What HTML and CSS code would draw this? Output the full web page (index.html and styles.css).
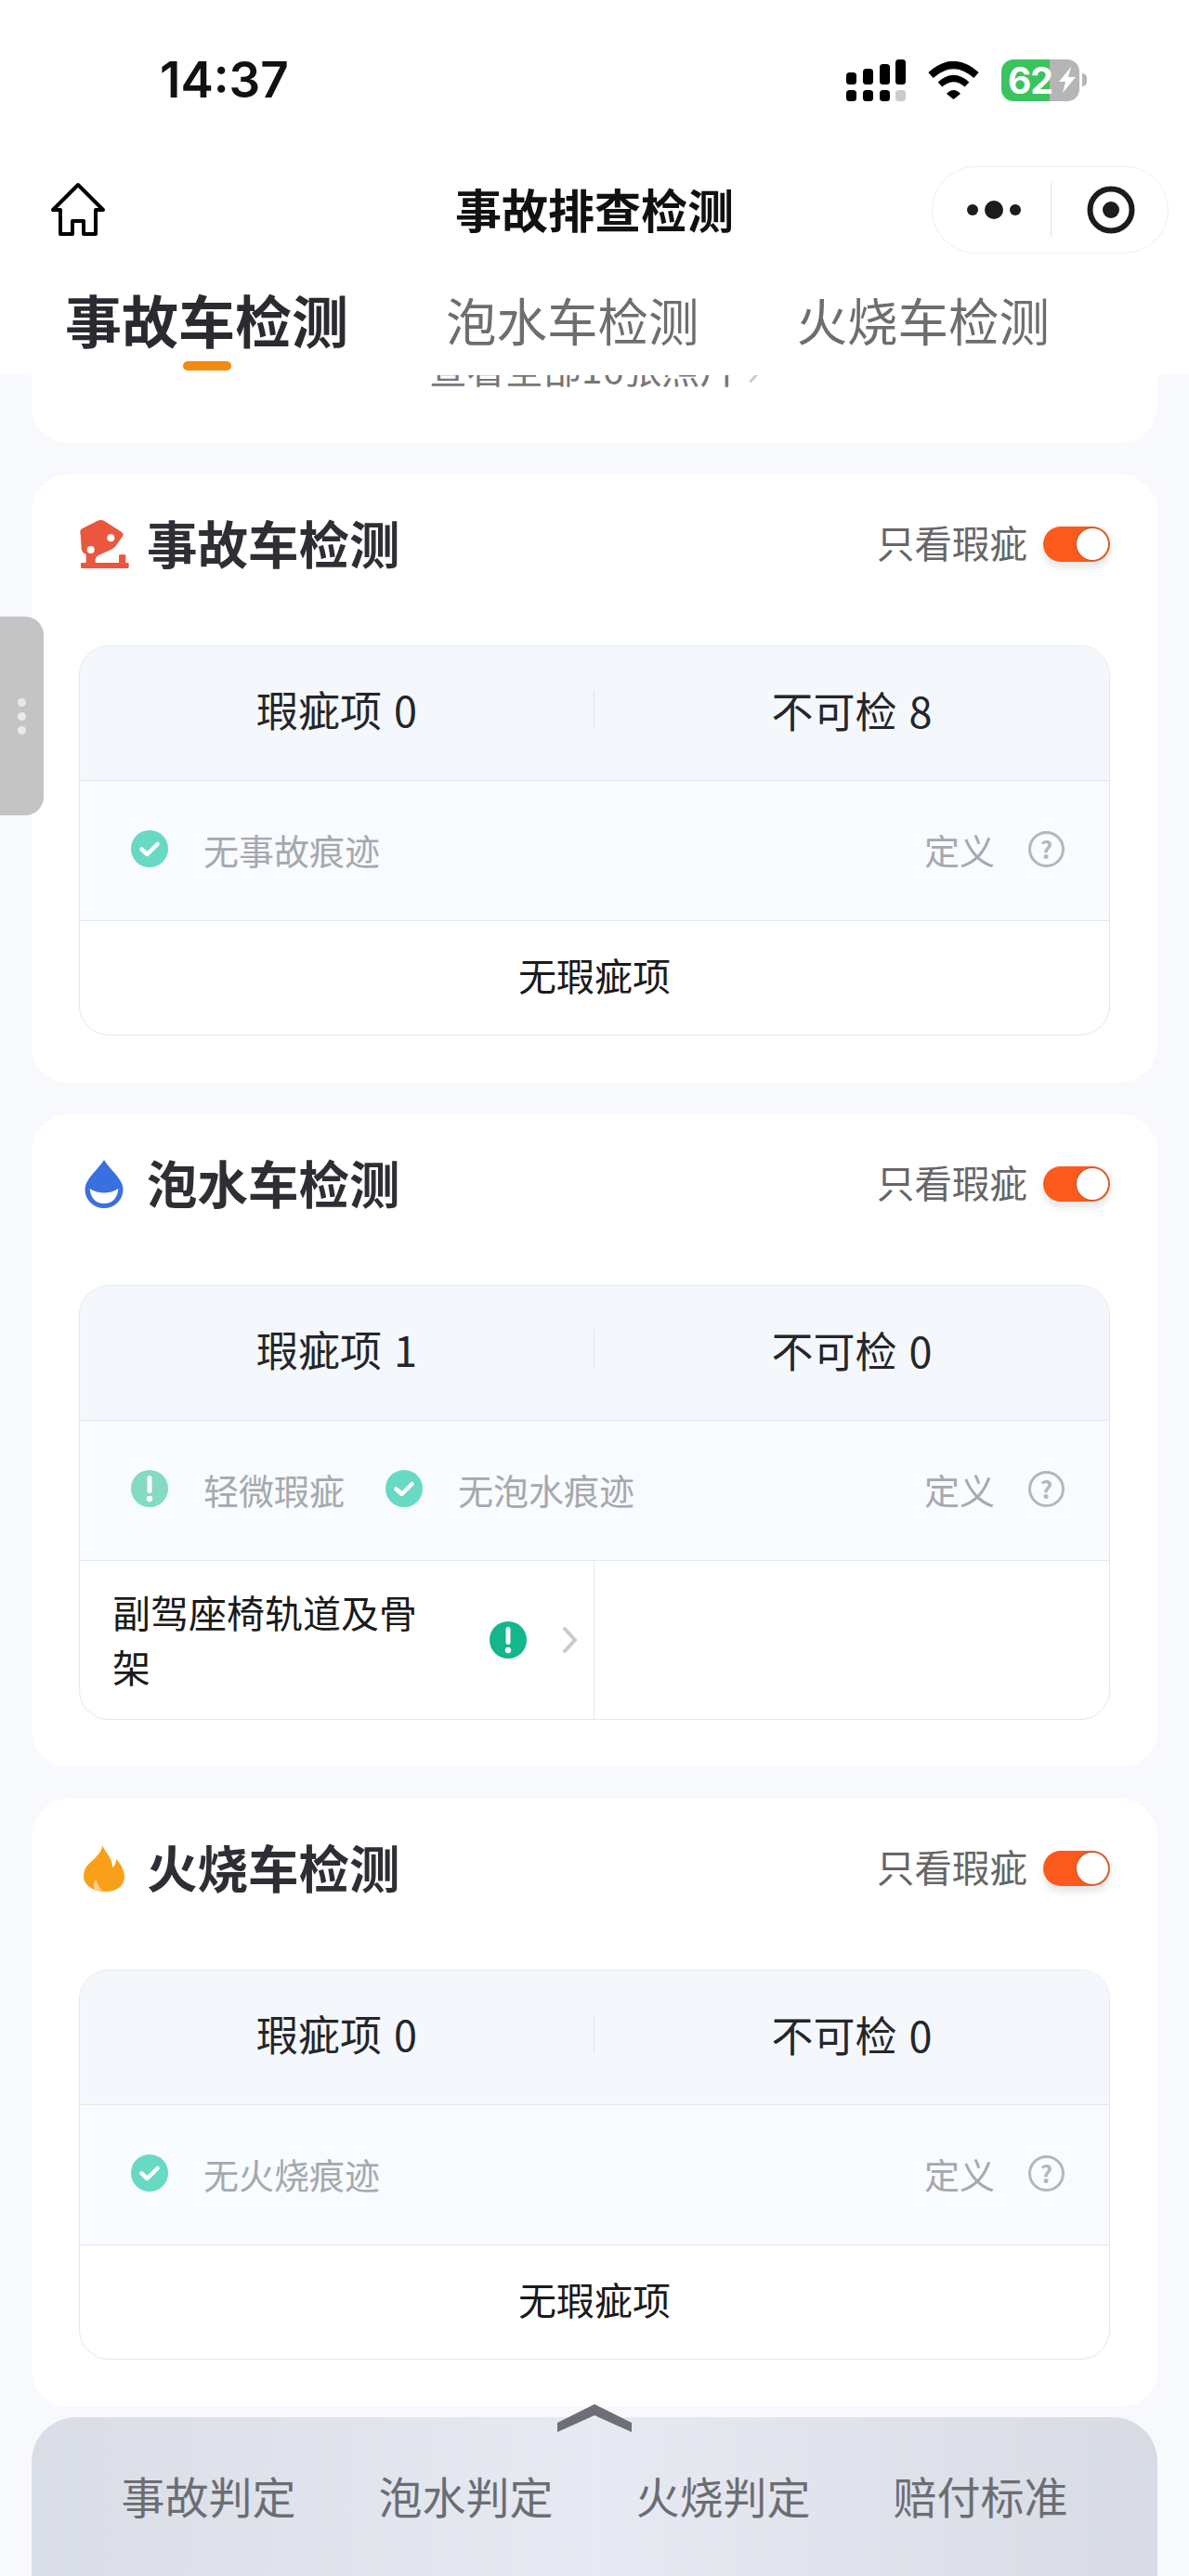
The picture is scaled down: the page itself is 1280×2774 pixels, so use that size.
FILE: index.html
```html
<!DOCTYPE html>
<html lang="zh-CN">
<head>
  <meta charset="UTF-8" />
  <meta name="viewport" content="width=device-width, initial-scale=1.0" />
  <title>事故排查检测</title>
  <link rel="stylesheet" href="styles.css">
</head>
<body>
  <svg class="sprites" width="0" height="0">
    <symbol id="icon-check" viewBox="0 0 40 40">
      <circle cx="20" cy="20" r="20" fill="currentColor" />
      <path d="M11.5 20.5l6 5.5 11-11" fill="none" stroke="#fff" stroke-width="4.5" stroke-linecap="round" stroke-linejoin="round" />
    </symbol>
    <symbol id="icon-alert" viewBox="0 0 40 40">
      <circle cx="20" cy="20" r="20" fill="currentColor" />
      <rect x="17.5" y="6" width="5" height="19" rx="2.5" fill="#fff" />
      <circle cx="20" cy="31" r="3.2" fill="#fff" />
    </symbol>
    <symbol id="icon-chevron" viewBox="0 0 17 30">
      <path d="M3 3l11 12L3 27" fill="none" stroke="#c9cacc" stroke-width="4" stroke-linecap="round" stroke-linejoin="round" />
    </symbol>
  </svg>

  <header id="topBar">
    <div class="status-bar">
      <div class="clock">14:37</div>
      <div class="status-icons">
        <svg class="signal" width="64" height="45" viewBox="0 0 64 45">
          <rect x="0" y="14" width="11" height="13" rx="3.5" />
          <rect x="18" y="10" width="11" height="17" rx="3.5" />
          <rect x="36" y="5" width="11" height="22" rx="3.5" />
          <rect x="53" y="0" width="11" height="27" rx="3.5" />
          <rect x="0" y="33" width="11" height="12" rx="3.5" />
          <rect x="18" y="33" width="11" height="12" rx="3.5" />
          <rect x="36" y="33" width="11" height="12" rx="3.5" />
          <rect x="53" y="33" width="11" height="12" rx="3.5" fill="#cbcbcb" />
        </svg>
        <svg class="wifi" width="57" height="41" viewBox="0 0 57 41">
          <path d="M4 15Q28.500-7 53 15" fill="none" stroke="#000" stroke-width="8" />
          <path d="M14 25Q28.500 12 43 25" fill="none" stroke="#000" stroke-width="7" />
          <path d="M21 35Q28.500 27 36 35L28.500 41Z" />
        </svg>
        <div class="battery">
          <div class="battery-body">
            <span>62</span>
            <svg width="22" height="28" viewBox="0 0 22 28"><path d="M15 0L2 16h7L6 28l14-17h-8z" fill="#fff" /></svg>
          </div>
          <div class="battery-cap"></div>
        </div>
      </div>
    </div>

    <div class="nav-bar">
      <svg class="home" width="60" height="60" viewBox="0 0 60 60">
        <path d="M30 3L3 30h8v26h13V42h12v14h13V30h8z" fill="none" stroke="#000" stroke-width="4" stroke-linejoin="round" />
      </svg>
      <div class="nav-title">事故排查检测</div>
      <div class="capsule">
        <svg width="64" height="24" viewBox="0 0 64 24">
          <circle cx="8" cy="12" r="6" fill="#1c1c1c" />
          <circle cx="31" cy="12" r="10" fill="#1c1c1c" />
          <circle cx="54" cy="12" r="6" fill="#1c1c1c" />
        </svg>
        <div class="capsule-line"></div>
        <svg width="52" height="52" viewBox="0 0 52 52">
          <circle cx="26" cy="26" r="22.500" fill="none" stroke="#1c1c1c" stroke-width="6" />
          <circle cx="26" cy="26" r="9" fill="#1c1c1c" />
        </svg>
      </div>
    </div>

    <div class="tabs">
      <div class="tab active">事故车检测<i class="tab-mark"></i></div>
      <div class="tab">泡水车检测</div>
      <div class="tab">火烧车检测</div>
    </div>
  </header>

  <div class="side-handle"><i></i><i></i><i></i></div>

  <main>
    <section class="card photo-card">
      <span>查看全部16张照片</span>
      <svg width="12" height="22" viewBox="0 0 17 30"><use href="#icon-chevron" /></svg>
    </section>

    <section class="card">
      <div class="card-head">
        <div class="card-title">
          <svg class="title-icon" width="54" height="52" viewBox="0 0 160 156">
            <path d="M4 44Q0 34 9 28L58 3Q70-3 82 4L136 38Q146 45 139 54L116 86Q110 92 102 96L62 114Q54 118 52 126V142H22V110Q10 108 7 94Z" fill="#e9573f" />
            <rect x="5" y="138" width="155" height="18" rx="4" fill="#e9573f" />
            <rect x="128" y="112" width="22" height="32" rx="3" fill="#e9573f" />
            <circle cx="102" cy="58" r="12" fill="#fff" />
            <circle cx="37" cy="96" r="12" fill="#fff" />
          </svg>
          <h2>事故车检测</h2>
        </div>
        <div class="only-flaws"><span>只看瑕疵</span><div class="switch"><i></i></div></div>
      </div>
      <div class="report">
        <div class="report-count">
          <div>瑕疵项 0</div>
          <div>不可检 8</div>
        </div>
        <div class="report-status">
          <div class="status-item"><svg class="mark check"><use href="#icon-check" /></svg>无事故痕迹</div>
          <div class="define">定义<span class="help">?</span></div>
        </div>
        <div class="report-empty">无瑕疵项</div>
      </div>
    </section>

    <section class="card">
      <div class="card-head">
        <div class="card-title">
          <svg class="title-icon" width="41" height="52" viewBox="0 0 41 52">
            <path d="M20.500 0C26 10 41 20 41 32A20.500 20 0 0 1 0 32C0 20 15 10 20.500 0Z" fill="#3a6fe0" />
            <path d="M5 31Q20.500 40 36 31Q34 47 20.500 47Q7 47 5 31Z" fill="#fff" />
          </svg>
          <h2>泡水车检测</h2>
        </div>
        <div class="only-flaws"><span>只看瑕疵</span><div class="switch"><i></i></div></div>
      </div>
      <div class="report">
        <div class="report-count">
          <div>瑕疵项 1</div>
          <div>不可检 0</div>
        </div>
        <div class="report-status">
          <div class="status-item"><svg class="mark alert-soft"><use href="#icon-alert" /></svg>轻微瑕疵</div>
          <div class="status-item"><svg class="mark check"><use href="#icon-check" /></svg>无泡水痕迹</div>
          <div class="define">定义<span class="help">?</span></div>
        </div>
        <div class="report-items">
          <div class="flaw-item">
            <div class="flaw-name">副驾座椅轨道及骨架</div>
            <svg class="mark alert"><use href="#icon-alert" /></svg>
            <svg class="flaw-arrow" width="17" height="30"><use href="#icon-chevron" /></svg>
          </div>
          <div></div>
        </div>
      </div>
    </section>

    <section class="card">
      <div class="card-head">
        <div class="card-title">
          <svg class="title-icon" width="44" height="50" viewBox="0 0 44 50">
            <path d="M20 0C24 9 31 13 31 24C34 22 35 19 35 15C41 21 44 28 44 34C44 44 35 50 24 50C11 50 0 44 0 33C0 22 9 18 14 12C17 9 20 5 20 0Z" fill="#f9a01b" />
            <path d="M12 48C10 44 11 40 13 37C15 42 17 45 20 49Z" fill="#fdd28a" />
          </svg>
          <h2>火烧车检测</h2>
        </div>
        <div class="only-flaws"><span>只看瑕疵</span><div class="switch"><i></i></div></div>
      </div>
      <div class="report">
        <div class="report-count">
          <div>瑕疵项 0</div>
          <div>不可检 0</div>
        </div>
        <div class="report-status">
          <div class="status-item"><svg class="mark check"><use href="#icon-check" /></svg>无火烧痕迹</div>
          <div class="define">定义<span class="help">?</span></div>
        </div>
        <div class="report-empty">无瑕疵项</div>
      </div>
    </section>
  </main>

  <footer class="bottom-sheet">
    <svg class="sheet-arrow" width="80" height="30" viewBox="0 0 80 30">
      <path d="M0 20L40 0L80 20V30L40 12L0 30Z" fill="#6d6f75" />
    </svg>
    <div>事故判定</div>
    <div>泡水判定</div>
    <div>火烧判定</div>
    <div>赔付标准</div>
  </footer>
</body>
</html>
```

FILE: styles.css
```css
body {
  margin: 0;
  width: 1280px;
  height: 2774px;
  overflow: hidden;
  position: relative;
  background-color: #f8f9fc;
  color: #1a1a1a;
  font-family: "Noto Sans CJK SC", "Noto Sans", sans-serif;
}

.sprites {
  display: block;
}

/* top area */
#topBar {
  position: relative;
  z-index: 2;
  height: 404px;
  background-color: #fff;
}

.status-bar {
  height: 179px;
  padding: 0 110px 7px 172px;
  box-sizing: border-box;
  display: flex;
  justify-content: space-between;
  align-items: center;
}

.clock {
  font-family: Inter, sans-serif;
  font-size: 53px;
  font-weight: 600;
  color: #111;
}

.status-icons {
  display: flex;
  align-items: center;
  gap: 23px;
}

.battery {
  display: flex;
  align-items: center;
  gap: 3px;
}

.battery-body {
  width: 84px;
  height: 45px;
  padding-left: 7px;
  box-sizing: border-box;
  border-radius: 13px;
  display: flex;
  align-items: center;
  gap: 5px;
  background: linear-gradient(90deg, #3bc45e 62%, #b5b5b5 62%);
  color: #fff;
  font-family: Inter, sans-serif;
  font-size: 39px;
  font-weight: 700;
  letter-spacing: -1px;
}

.battery-cap {
  width: 5px;
  height: 14px;
  border-radius: 0 5px 5px 0;
  background-color: #b5b5b5;
}

.nav-bar {
  height: 94px;
  padding: 0 22px;
  display: grid;
  grid-template-columns: 1fr auto 1fr;
  align-items: center;
}

.home {
  justify-self: start;
  margin-left: 32px;
}

.nav-title {
  padding-bottom: 4px;
  font-size: 50px;
  font-weight: 700;
  color: #111;
}

.capsule {
  justify-self: end;
  width: 255px;
  height: 94px;
  box-sizing: border-box;
  border: 1px solid #efefef;
  border-radius: 47px;
  display: flex;
  align-items: center;
  padding-left: 35px;
}

.capsule-line {
  width: 1px;
  height: 60px;
  margin: 0 38px 0 28px;
  background-color: #e6e6e6;
}

.tabs {
  height: 131px;
  padding: 38px 0 0 70px;
  box-sizing: border-box;
  display: flex;
  align-items: flex-start;
  gap: 105px;
}

.tab {
  font-size: 54.500px;
  line-height: 66px;
  color: #6e6e6e;
  white-space: nowrap;
}

.tab.active {
  font-size: 61px;
  font-weight: 700;
  color: #2a2b30;
  display: flex;
  flex-direction: column;
  align-items: center;
}

.tab-mark {
  width: 52px;
  height: 10px;
  margin-top: 12px;
  border-radius: 5px;
  background-color: #f28a10;
}

.side-handle {
  position: absolute;
  z-index: 3;
  left: 0;
  top: 664px;
  width: 47px;
  height: 214px;
  border-radius: 0 20px 20px 0;
  background-color: #c4c4c4;
  display: flex;
  flex-direction: column;
  align-items: center;
  justify-content: center;
  gap: 6px;
}

.side-handle i {
  width: 9px;
  height: 9px;
  border-radius: 50%;
  background-color: #e9e9e9;
}

/* cards */
main {
  padding: 0 34px;
  display: flex;
  flex-direction: column;
  gap: 34px;
}

.card {
  padding: 0 51px 51px;
  border-radius: 40px;
  background-color: #fff;
}

.photo-card {
  height: 119px;
  margin-top: -46px;
  padding: 0 0 64px;
  box-sizing: border-box;
  display: flex;
  justify-content: center;
  align-items: flex-end;
  gap: 12px;
  font-size: 41px;
  line-height: 36px;
  color: #777;
}

.card-head {
  height: 150px;
  margin-bottom: 34px;
  display: flex;
  justify-content: space-between;
  align-items: center;
}

.card-title {
  display: flex;
  align-items: center;
}

.title-icon {
  width: 54px;
  margin-right: 19px;
}

.card-title h2 {
  margin: 0;
  padding-bottom: 6px;
  font-size: 54.500px;
  font-weight: 700;
  color: #2e2f35;
}

.only-flaws {
  display: flex;
  align-items: center;
  gap: 17px;
  font-size: 40.500px;
  color: #666;
}

.only-flaws span {
  padding-bottom: 6px;
}

.switch {
  width: 72px;
  height: 38px;
  padding: 2px;
  box-sizing: border-box;
  border-radius: 19px;
  background-color: #fb5a1c;
  display: flex;
  justify-content: flex-end;
  box-shadow: 0 6px 8px rgba(0, 0, 0, 0.1);
}

.switch i {
  width: 34px;
  height: 34px;
  border-radius: 50%;
  background-color: #fff;
  box-shadow: 0 0 0 1px #c9562c;
}

/* report table */
.report {
  border: 1px solid #e3e7ec;
  border-radius: 32px;
  overflow: hidden;
}

.report-count {
  height: 145px;
  padding-bottom: 8px;
  box-sizing: border-box;
  display: grid;
  grid-template-columns: 1fr 1fr;
  align-items: center;
  text-align: center;
  font-size: 45px;
  word-spacing: 3px;
  color: #24262b;
  background-color: #f4f8fd;
  border-bottom: 1px solid #e3e7ec;
}

.report-count div:first-child {
  border-right: 1px solid #dfe3e8;
  line-height: 42px;
}

.report-status {
  height: 151px;
  padding: 0 48px 4px 55px;
  box-sizing: border-box;
  display: flex;
  align-items: center;
  gap: 44px;
  font-size: 38px;
  color: #a5a9ad;
  background-color: #f8fbff;
  border-bottom: 1px solid #e3e7ec;
}

.status-item {
  display: flex;
  align-items: center;
  gap: 38px;
}

.mark {
  flex: none;
  width: 40px;
  height: 40px;
}

.check {
  color: #68d9c2;
}

.alert-soft {
  color: #85dac4;
}

.alert {
  color: #14b68c;
}

.define {
  margin-left: auto;
  display: flex;
  align-items: center;
  gap: 36px;
}

.help {
  width: 33px;
  height: 33px;
  border: 3px solid #b4b7ba;
  border-radius: 50%;
  display: flex;
  align-items: center;
  justify-content: center;
  font-size: 26px;
  font-weight: 700;
  line-height: 1;
  color: #b4b7ba;
}

.report-empty {
  height: 122px;
  padding-bottom: 8px;
  box-sizing: border-box;
  display: flex;
  align-items: center;
  justify-content: center;
  font-size: 41px;
  color: #1a1a1a;
}

.report-items {
  display: grid;
  grid-template-columns: 1fr 1fr;
}

.flaw-item {
  height: 170px;
  padding: 0 17px 0 35px;
  display: flex;
  align-items: center;
  border-right: 1px solid #e3e7ec;
}

.flaw-name {
  width: 335px;
  padding-bottom: 3px;
  font-size: 41px;
  line-height: 59px;
  color: #1a1a1a;
}

.flaw-item .mark {
  margin-left: auto;
}

.flaw-arrow {
  margin-left: 38px;
}

/* bottom sheet */
.bottom-sheet {
  position: relative;
  height: 171px;
  margin: 11px 34px 0;
  padding: 57px 52px 0;
  box-sizing: border-box;
  border-radius: 48px 48px 0 0;
  background: linear-gradient(90deg, #d9dde5, #e7eaf2 50%, #d7dbe3);
  display: grid;
  grid-template-columns: repeat(4, 1fr);
  justify-items: center;
  font-size: 47px;
  line-height: 54px;
  color: #6b6d73;
}

.sheet-arrow {
  position: absolute;
  left: 566px;
  top: -14px;
}
```
